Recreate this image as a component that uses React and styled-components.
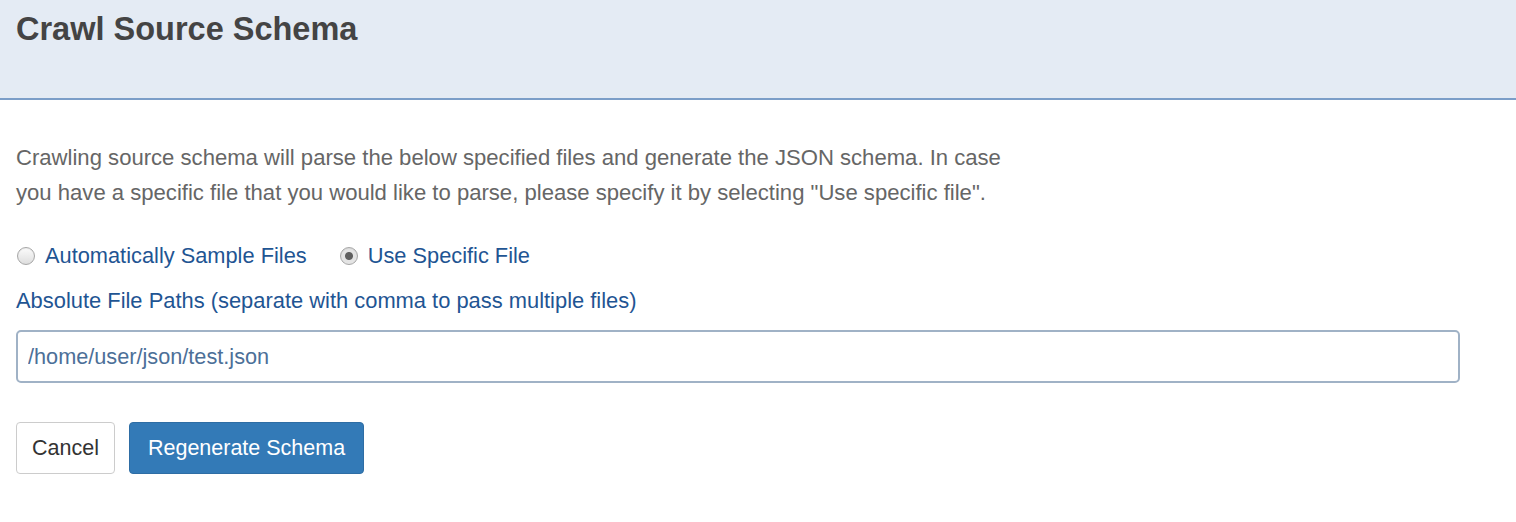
import React from 'react'
import styled, { createGlobalStyle } from 'styled-components'

const GlobalStyle = createGlobalStyle`
    body {
        margin: 0;
        background: #ffffff;
        font-family: "Liberation Sans", Arial, sans-serif;
    }
`

const Page = styled.div`
    width: 100%;
    display: flex;
    flex-direction: column;
`

const Header = styled.div`
    height: 100px;
    background: #e4ebf4;
    border-bottom: 2px solid #7b9ec8;
    padding: 11px 16px 0;
    box-sizing: border-box;
`

const Title = styled.h1`
    margin: 0;
    font-size: 32.5px;
    font-weight: bold;
    color: #444444;
    line-height: 36px;
`

const Body = styled.div`
    padding: 40px 16px 0;
    display: flex;
    flex-direction: column;
`

const Intro = styled.p`
    margin: 0;
    max-width: 1005px;
    font-size: 22.1px;
    line-height: 35px;
    color: #666666;
`

const RadioRow = styled.div`
    display: flex;
    align-items: center;
    gap: 32px;
    margin-top: 33px;
    line-height: 25px;
`

const RadioLabel = styled.label`
    display: flex;
    align-items: center;
    gap: 10px;
    font-size: 21.8px;
    color: #1f5593;
    cursor: pointer;
`

const RadioDot = styled.span`
    width: 18px;
    height: 18px;
    margin-left: 1px;
    border-radius: 50%;
    box-sizing: border-box;
    border: 1px solid #a6a6a6;
    background: ${({checked}) => checked
        ? 'radial-gradient(circle, #5f5f5f 0 3.5px, #e4e4e4 4.5px)'
        : 'linear-gradient(#fbfbfb, #dedede)'};
    box-shadow: inset 0 1px 1px rgba(0,0,0,0.06);
    flex-shrink: 0;
`

const FieldLabel = styled.div`
    margin-top: 20px;
    font-size: 21.9px;
    line-height: 25px;
    color: #1f5593;
`

const PathInput = styled.input`
    margin-top: 17px;
    width: 1444px;
    height: 53px;
    box-sizing: border-box;
    border: 2px solid #a0b2c6;
    border-radius: 5px;
    padding: 0 10px;
    font-family: inherit;
    font-size: 21.7px;
    color: #4c6f98;
    outline: none;
`

const Actions = styled.div`
    display: flex;
    gap: 14px;
    margin-top: 39px;
`

const Button = styled.button`
    height: 52px;
    padding: 0 ${({primary}) => primary ? '18px' : '15px'};
    border-radius: 4px;
    font-family: inherit;
    font-size: 21.5px;
    cursor: pointer;
    border: 1px solid ${({primary}) => primary ? '#2e6da4' : '#cccccc'};
    background: ${({primary}) => primary ? '#337ab7' : '#ffffff'};
    color: ${({primary}) => primary ? '#ffffff' : '#333333'};
`

const App = () => {
  return (
    <Page>
        <GlobalStyle/>
        <Header>
            <Title>Crawl Source Schema</Title>
        </Header>
        <Body>
            <Intro>
                Crawling source schema will parse the below specified files and generate the JSON schema. In case
                you have a specific file that you would like to parse, please specify it by selecting "Use specific file".
            </Intro>
            <RadioRow>
                <RadioLabel><RadioDot/>Automatically Sample Files</RadioLabel>
                <RadioLabel><RadioDot checked/>Use Specific File</RadioLabel>
            </RadioRow>
            <FieldLabel>Absolute File Paths (separate with comma to pass multiple files)</FieldLabel>
            <PathInput defaultValue='/home/user/json/test.json'/>
            <Actions>
                <Button>Cancel</Button>
                <Button primary>Regenerate Schema</Button>
            </Actions>
        </Body>
    </Page>
  )
}

export default App
